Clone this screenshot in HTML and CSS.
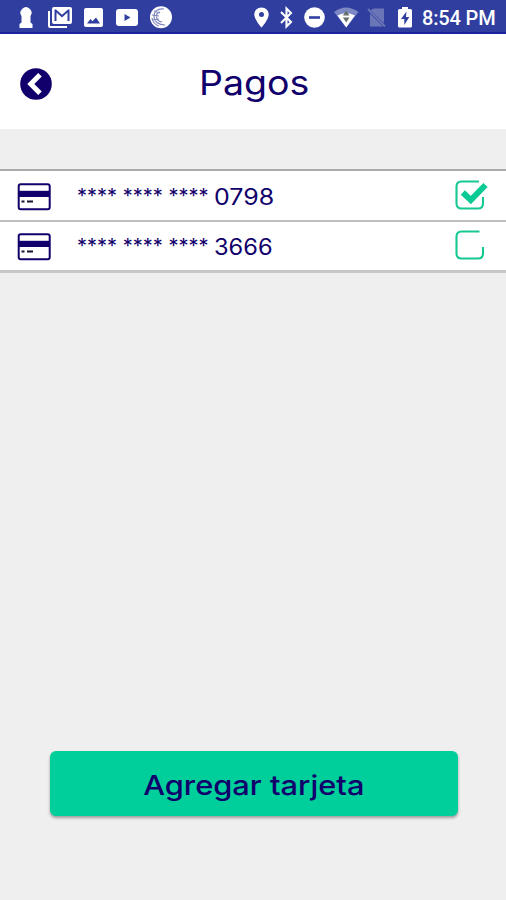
FILE: index.html
```html
<!DOCTYPE html>
<html lang="es">
<head>
<meta charset="utf-8">
<title>Pagos</title>
<link rel="stylesheet" href="styles.css">
</head>
<body>
<div class="statusbar">
  <svg class="status-icons" width="190" height="34" viewBox="0 0 190 34" fill="#fff">
    <path d="M19.500 28v-4l2-1.500V16a5.500 5.500 0 1 1 9 0v6.500l2 1.500v4z"/>
    <path d="M48 11h2v15h17v2H50q-2 0-2-2z"/>
    <path fill-rule="evenodd" d="M54 7h16q2 0 2 2v13q0 2-2 2H54q-2 0-2-2V9q0-2 2-2zm.5 2.500V21h2v-8.500l5.500 5 5.500-5V21h2V9.500h-1.500L62 14.800l-6-5.300z"/>
    <path fill-rule="evenodd" d="M86 8h15q2 0 2 2v15q0 2-2 2H86q-2 0-2-2V10q0-2 2-2zm1 15.500h13l-4-6-3.500 3.800-2-2.300z"/>
    <path fill-rule="evenodd" d="M119 9h16q3 0 3 3v11q0 3-3 3h-16q-3 0-3-3V12q0-3 3-3zm5.500 5v7l6-3.500z"/>
    <circle cx="161" cy="17.300" r="11"/>
    <g fill="none" stroke="#7c85bd" stroke-width="1.200"><path d="M164 9c-7-1-10 3-10 7 0 6 5 9 11 9M160 12c-5 1-5 9 2 10M152 18c1 5 4 7 7 8M154 11l6 2m-8 2 7 1m-6 4 6-1"/></g>
  </svg>
  <svg class="status-icons" width="166" height="34" viewBox="250 0 166 34" fill="#fff">
    <path fill-rule="evenodd" d="M261.500 7.500c-4.100 0-7.200 3.100-7.200 7 0 5 7.200 13 7.200 13s7.200-8 7.200-13c0-3.900-3.100-7-7.200-7zm0 4.500a2.500 2.500 0 1 1 0 5 2.500 2.500 0 0 1 0-5z"/>
    <path fill="none" stroke="#fff" stroke-width="2.100" d="m281 12 10 10-4.500 4.500v-18L291 13l-10 10"/>
    <circle cx="314.500" cy="17.500" r="10.300"/><path fill="#303f9f" d="M309 16.200h11v2.600h-11z"/>
    <path fill="#7d87c4" d="M334 12q12-9 24.500 0L346.200 27.500z"/>
    <path d="M337.500 15.500q8.700-5 17.400 0l-8.700 12z"/>
    <path fill="#66706c" d="m346.200 10.500 3.300 5h-6.600zm-3.300 7h6.600l-3.300 5z"/>
    <path fill="#6b76b9" d="M373.500 8.500H384v14.800L370.800 10.200z"/>
    <path fill="#6b76b9" d="M370 13.500 383 26.500h-13z"/>
    <path fill="none" stroke="#6b76b9" stroke-width="1.800" d="m368 9 17 17.500"/>
    <path fill-rule="evenodd" d="M402 7h6v2h2.500q1.500 0 1.500 1.500V26q0 1.500-1.500 1.500h-11Q398 27.500 398 26V10.500Q398 9 399.500 9h2.500zm4.500 4.500-5.500 7.500h3.300v6l5-8H406z"/>
  </svg>
  <span class="clock">8:54 PM</span>
</div>
<header class="header">
  <svg class="back" width="32" height="32" viewBox="0 0 32 32"><circle cx="16" cy="16" r="15.800" fill="#11006b"/><path d="M20 6.800 10.800 16l9.200 9.200" fill="none" stroke="#fff" stroke-width="5"/></svg>
  <h1 class="title">Pagos</h1>
</header>
<main class="cards">
  <div class="card">
    <svg class="card-icon" width="34" height="28" viewBox="0 0 34 28"><rect x="1.700" y="1.200" width="31" height="25" rx="2" fill="#fff" stroke="#11006b" stroke-width="2"/><path d="M1.500 7.800h31v6.200h-31z" fill="#11006b"/><path d="M4.500 18.500h3m2.500 0h6" stroke="#16132f" stroke-width="1.800"/></svg>
    <span class="mask">**** **** ****</span><span class="digits">0798</span>
    <svg class="check" width="36" height="34" viewBox="0 0 36 34"><path d="M26 2.500H8.500q-5 0-5 5v17q0 5 5 5H25q5 0 5-5V18" fill="none" stroke="#16c891" stroke-width="2.100"/><path d="m9.800 13.500 8 7.500L32.500 6" fill="none" stroke="#08ca94" stroke-width="6"/></svg>
  </div>
  <div class="card card-last">
    <svg class="card-icon" width="34" height="28" viewBox="0 0 34 28"><rect x="1.700" y="1.200" width="31" height="25" rx="2" fill="#fff" stroke="#11006b" stroke-width="2"/><path d="M1.500 7.800h31v6.200h-31z" fill="#11006b"/><path d="M4.500 18.500h3m2.500 0h6" stroke="#16132f" stroke-width="1.800"/></svg>
    <span class="mask">**** **** ****</span><span class="digits digits-narrow">3666</span>
    <svg class="check" width="36" height="34" viewBox="0 0 36 34"><path d="M26.500 2.500H8.500q-5 0-5 5v17q0 5 5 5H25q5 0 5-5V18" fill="none" stroke="#16c891" stroke-width="2.100"/></svg>
  </div>
</main>
<button class="add"><span class="add-label">Agregar tarjeta</span></button>
</body>
</html>
```
FILE: styles.css
```css
* { box-sizing: border-box; }
body {
  margin: 0;
  height: 900px;
  display: flex;
  flex-direction: column;
  background: #efefef;
  color: #11006b;
  font-family: Inter, "Liberation Sans", sans-serif;
  overflow: hidden;
}
.statusbar {
  height: 34px;
  flex: none;
  display: flex;
  background: #303f9f;
  border-bottom: 2px solid #1b229b;
  color: #fff;
}
.status-icons { flex: none; }
.status-icons + .status-icons { margin-left: 60px; }
.clock {
  margin-left: 6px;
  font: 500 20px/36px Roboto, sans-serif;
  letter-spacing: -.15px;
  white-space: nowrap;
}
.header {
  height: 95px;
  flex: none;
  display: flex;
  align-items: center;
  padding: 5px 0 0 20px;
  background: #fff;
}
.back { flex: none; }
.title {
  margin: -2px 0 0 147px;
  font-size: 33.5px;
  font-weight: 400;
  line-height: 40px;
  transform: scaleX(1.12);
  transform-origin: left;
}
.cards {
  margin-top: 40px;
  border-top: 2px solid #aaa;
}
.card {
  height: 51px;
  display: flex;
  align-items: center;
  padding-left: 17px;
  background: #fff;
  border-bottom: 2px solid #c0c0c0;
}
.card-last {
  height: 51px;
  border-bottom: 3px solid #c8c8c8;
}
.card-icon { flex: none; margin-top: 2px; }
.mask {
  width: 136px;
  margin-left: 26px;
  font-size: 20px;
  line-height: 28px;
  white-space: nowrap;
}
.digits {
  width: 60px;
  margin-top: 2px;
  font-size: 22.5px;
  line-height: 28px;
  transform: translateX(1px) scaleX(1.11);
  transform-origin: left;
}
.digits-narrow { transform: translateX(1px) scaleX(1.05); }
.check { margin-left: 180px; flex: none; }
.add {
  width: 408px;
  height: 65px;
  margin: auto auto 84px 50px;
  padding: 0;
  border: 0;
  border-radius: 6px;
  background: #00ce9b;
  box-shadow: 0 2px 3px rgba(0, 0, 0, .35);
  color: #11006b;
  font: 500 27.5px/40px Inter, sans-serif;
}
.add-label { display: inline-block; padding-top: 2px; white-space: nowrap; transform: scaleX(1.12); }
```
